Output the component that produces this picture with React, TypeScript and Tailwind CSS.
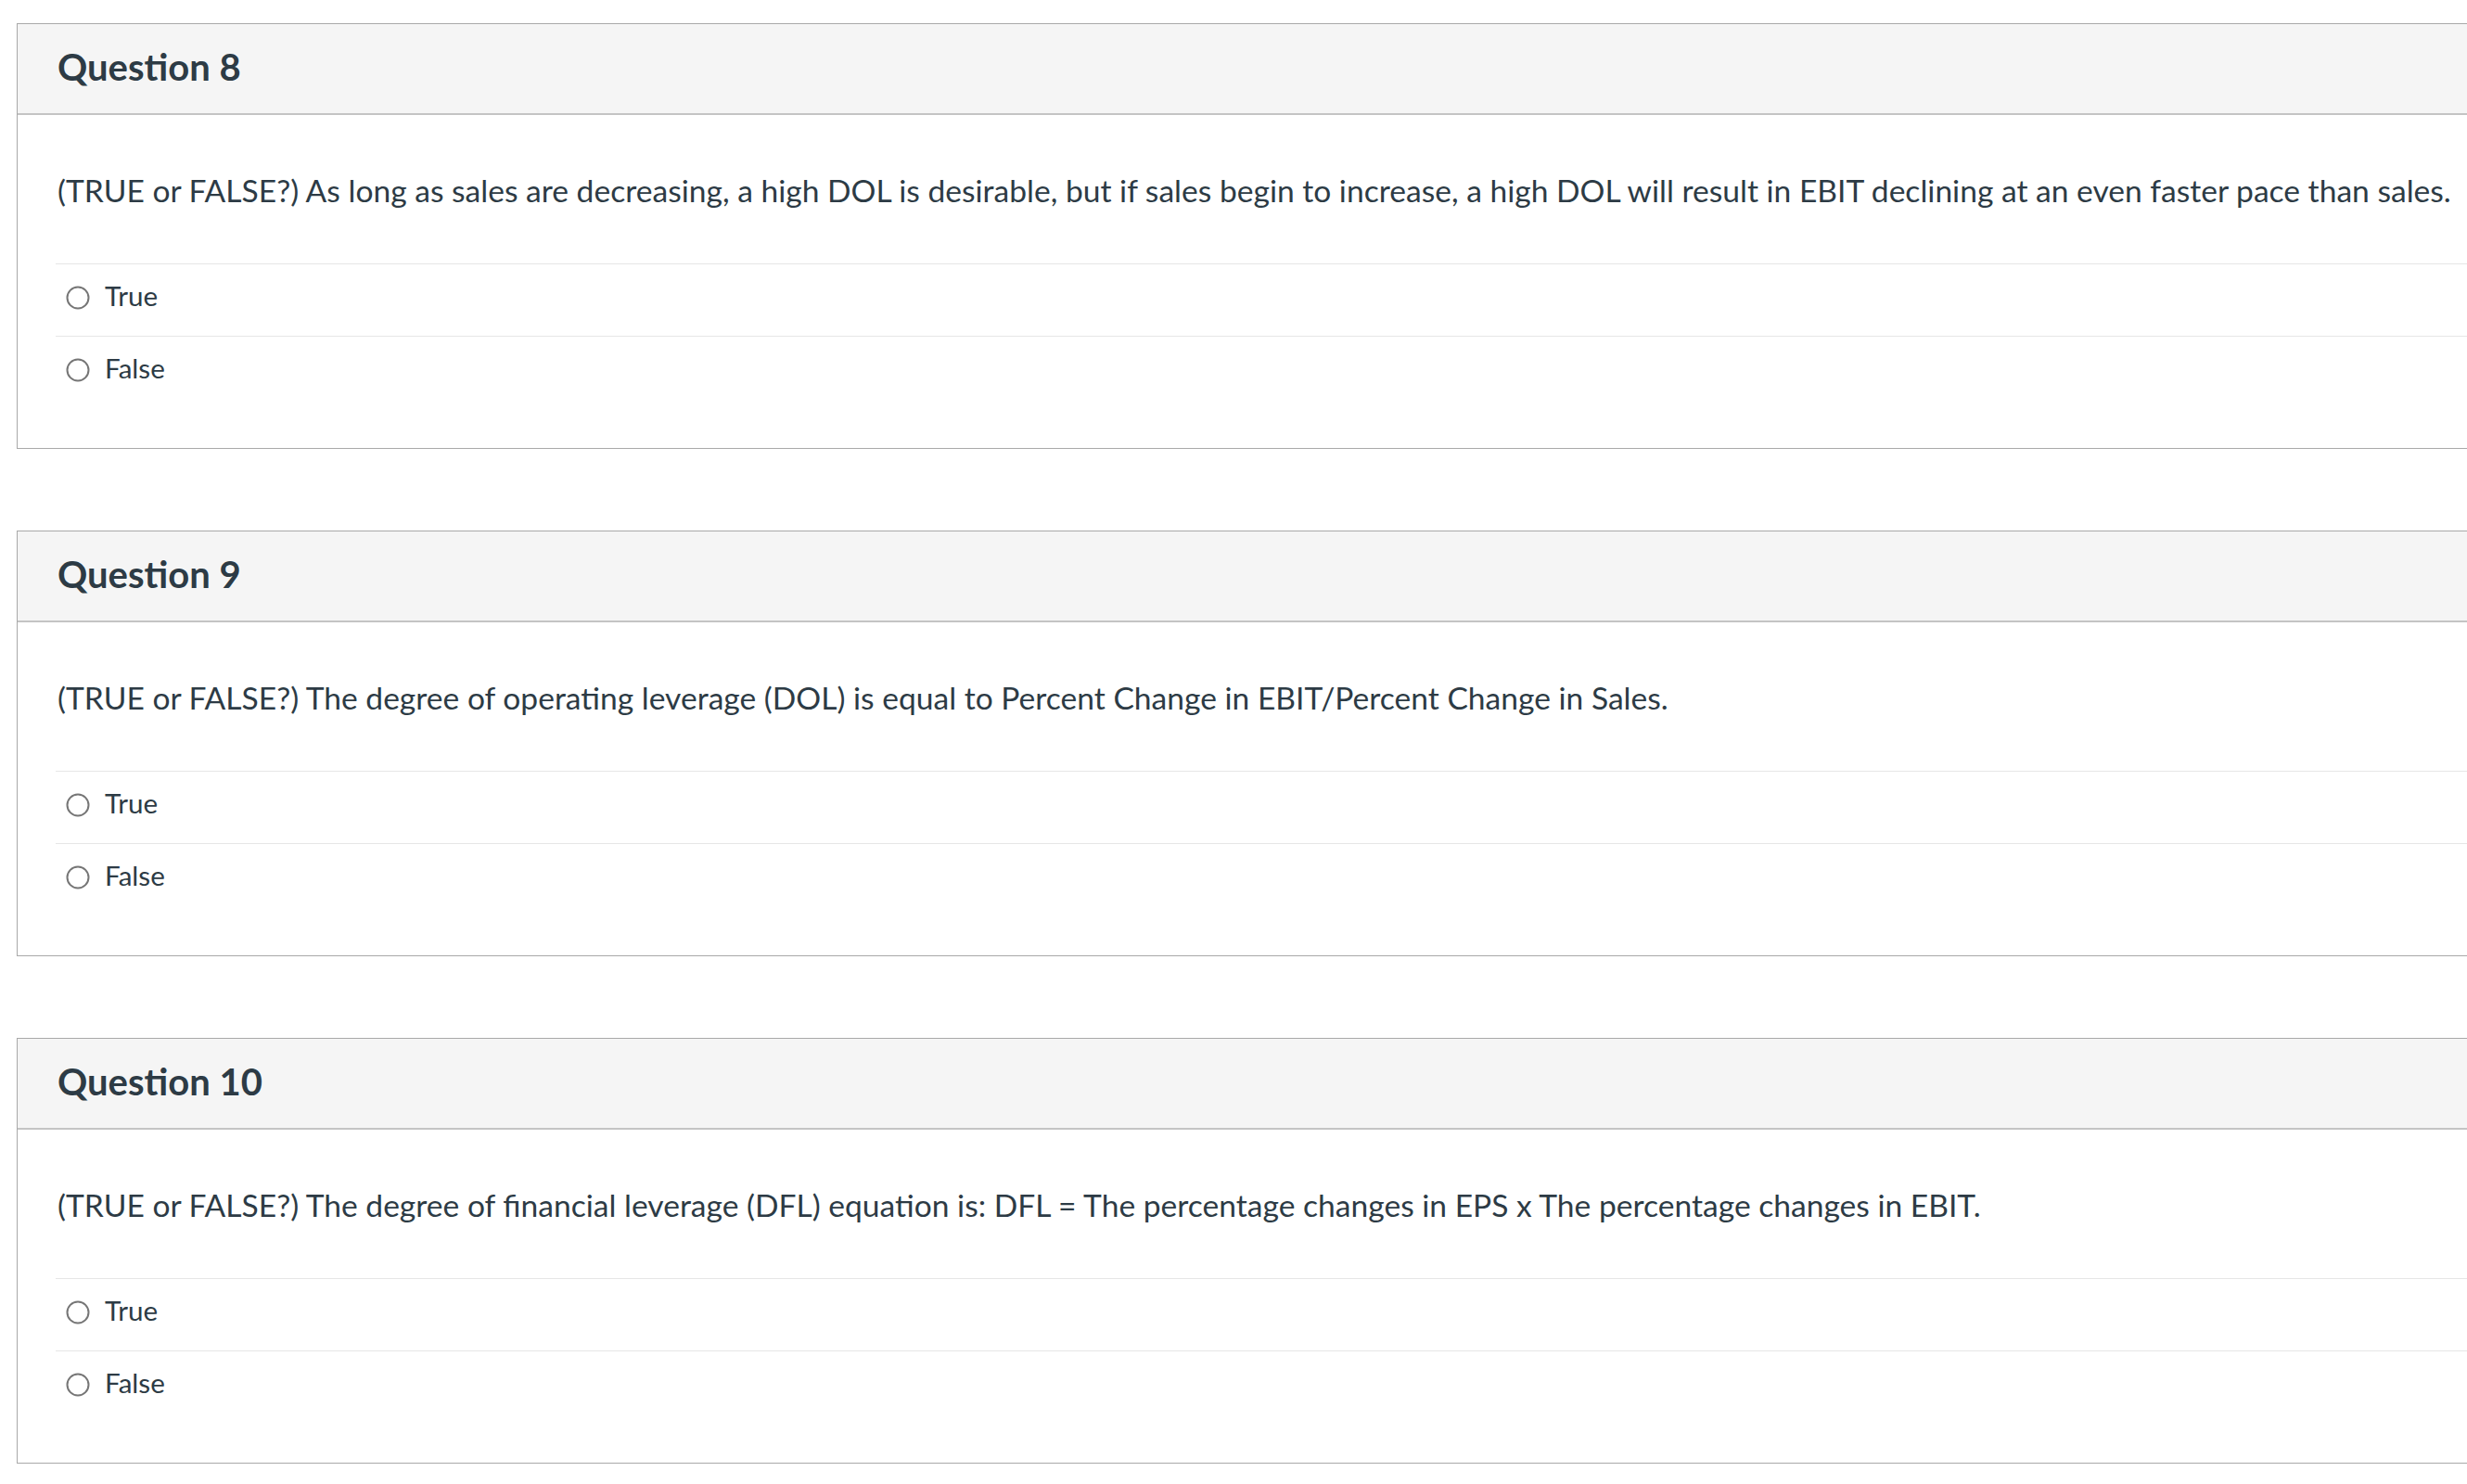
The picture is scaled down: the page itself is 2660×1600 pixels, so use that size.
import React from "react";

type Q = { num: number; text: string };

const questions: Q[] = [
  {
    num: 8,
    text:
      "(TRUE or FALSE?) As long as sales are decreasing, a high DOL is desirable, but if sales begin to increase, a high DOL will result in EBIT declining at an even faster pace than sales.",
  },
  {
    num: 9,
    text:
      "(TRUE or FALSE?) The degree of operating leverage (DOL) is equal to Percent Change in EBIT/Percent Change in Sales.",
  },
  {
    num: 10,
    text:
      "(TRUE or FALSE?) The degree of financial leverage (DFL) equation is: DFL = The percentage changes in EPS x The percentage changes in EBIT.",
  },
];

function Radio() {
  return (
    <svg width="26" height="26" viewBox="0 0 26 26" className="shrink-0 mt-[4px]">
      <circle cx="13" cy="13" r="11.5" fill="white" stroke="#767676" strokeWidth="2" />
    </svg>
  );
}

function Answer({ label }: { label: string }) {
  return (
    <div className="flex h-[78px] items-center border-t border-[#e6e6e6] pl-[11px] pb-[9px]">
      <Radio />
      <span className="ml-[16px] text-[29.6px] leading-[36px] text-[#2d3b45]">{label}</span>
    </div>
  );
}

function Card({ q }: { q: Q }) {
  return (
    <div className="ml-[18px] border-y-[1.5px] border-l-[1.5px] border-[#a9a9a9] bg-white">
      <div className="flex h-[98px] items-center border-b-2 border-[#c4c4c4] bg-[#f5f5f5] pl-[43px] pb-[4px]">
        <h2 className="text-[40px] font-bold leading-none text-[#2d3b45]">Question {q.num}</h2>
      </div>
      <div className="pl-[43px] pt-[57px] pb-[55px]">
        <p className="whitespace-nowrap text-[33.6px] leading-[48px] text-[#2d3b45]">{q.text}</p>
      </div>
      <div className="ml-[41px] pb-[43px]">
        <Answer label="True" />
        <Answer label="False" />
      </div>
    </div>
  );
}

export default function App() {
  return (
    <div
      className="min-h-[1600px] w-full overflow-hidden bg-white pt-[25px]"
      style={{ fontFamily: "Lato, 'Liberation Sans', sans-serif" }}
    >
      <div className="flex flex-col gap-[88px]">
        {questions.map((q) => (
          <Card key={q.num} q={q} />
        ))}
      </div>
    </div>
  );
}
